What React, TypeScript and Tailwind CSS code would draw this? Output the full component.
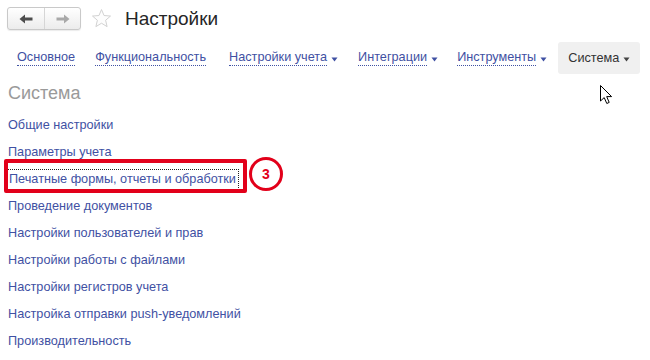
import React from "react";

const Caret = ({ color }: { color: string }) => (
  <svg width="7" height="5" viewBox="0 0 7 5" className="ml-[4px] mt-[2px] shrink-0">
    <path d="M0.5 0.5 L6.5 0.5 L3.5 4.5 Z" fill={color} />
  </svg>
);

const Tab = ({ label, caret }: { label: string; caret?: boolean }) => (
  <div className="flex items-center whitespace-nowrap shrink-0">
    <span className="text-[12.7px] text-[#3f51a3] border-b border-dotted border-[#3f51a3] leading-[15px]">
      {label}
    </span>
    {caret && <Caret color="#3f51a3" />}
  </div>
);

const items = [
  "Общие настройки",
  "Параметры учета",
  "Печатные формы, отчеты и обработки",
  "Проведение документов",
  "Настройки пользователей и прав",
  "Настройки работы с файлами",
  "Настройки регистров учета",
  "Настройка отправки push-уведомлений",
  "Производительность",
];

export default function App() {
  return (
    <div className="w-[650px] h-[360px] bg-white relative overflow-hidden font-['Liberation_Sans',Arial,sans-serif]">
      {/* Header */}
      <div className="h-[37px] flex items-center pl-[7px]">
        <div className="w-[74px] h-[23px] flex border border-[#c9c9c9] rounded-[3px] bg-gradient-to-b from-white to-[#ececec] shadow-[0_1px_1px_rgba(0,0,0,0.08)]">
          <div className="w-[37px] h-full flex items-center justify-center border-r border-[#d6d6d6]">
            <svg width="14" height="10" viewBox="0 0 14 10">
              <path d="M0.5 5 L6 0.5 L6 3.5 L13.5 3.5 L13.5 6.5 L6 6.5 L6 9.5 Z" fill="#4d4d4d" />
            </svg>
          </div>
          <div className="flex-1 h-full flex items-center justify-center">
            <svg width="14" height="10" viewBox="0 0 14 10">
              <path d="M13.5 5 L8 0.5 L8 3.5 L0.5 3.5 L0.5 6.5 L8 6.5 L8 9.5 Z" fill="#a9a9a9" />
            </svg>
          </div>
        </div>
        <svg width="21" height="21" viewBox="0 0 24 24" className="ml-[10px]">
          <path
            d="M12 1.8 L14.9 8.6 L22.3 9.2 L16.7 14 L18.4 21.3 L12 17.4 L5.6 21.3 L7.3 14 L1.7 9.2 L9.1 8.6 Z"
            fill="#fdfdfd"
            stroke="#cfcfcf"
            strokeWidth="1.1"
            strokeLinejoin="round"
          />
        </svg>
        <span className="ml-[13px] text-[19px] text-[#262626] leading-none">Настройки</span>
      </div>

      {/* Tabs */}
      <div className="mt-[5px] h-[32px] flex items-center pl-[17px]">
        <Tab label="Основное" />
        <div className="w-[20px] shrink-0" />
        <Tab label="Функциональность" />
        <div className="w-[23px] shrink-0" />
        <Tab label="Настройки учета" caret />
        <div className="w-[20px] shrink-0" />
        <Tab label="Интеграции" caret />
        <div className="w-[19px] shrink-0" />
        <Tab label="Инструменты" caret />
        <div className="w-[11px] shrink-0" />
        <div className="h-[32px] flex items-center px-[10px] bg-[#f0f0f0] rounded-[3px] whitespace-nowrap shrink-0">
          <span className="text-[12.7px] text-[#333] leading-[15px]">Система</span>
          <Caret color="#444" />
        </div>
      </div>

      {/* Heading */}
      <div className="mt-[8px] h-[22px] pl-[8px] flex items-center text-[18px] text-[#9a9a9a] leading-none">
        Система
      </div>

      {/* List */}
      <div className="mt-[8px] flex flex-col">
        {items.map((t, i) => (
          <div key={t} className="h-[27px] flex items-center pl-[8px] relative">
            {i === 2 ? (
              <>
                <span className="text-[12.7px] text-[#3f51a3] leading-[15px] outline outline-1 outline-dotted outline-[#222] outline-offset-[2px] ml-[1px] whitespace-nowrap">
                  {t}
                </span>
                <div className="absolute left-[4px] top-[-7px] w-[243px] h-[34px] border-[4px] border-[#e2001a] rounded-[2px]" />
                <div className="absolute left-[249px] top-[-9px] w-[34px] h-[34px] rounded-full border-[3px] border-[#e2001a] flex items-center justify-center text-[14px] font-bold text-[#e2001a]">
                  3
                </div>
              </>
            ) : (
              <span className="text-[12.7px] text-[#3f51a3] leading-[15px] whitespace-nowrap">{t}</span>
            )}
          </div>
        ))}
      </div>

      {/* Cursor */}
      <svg width="13" height="20" viewBox="0 0 13 20" className="absolute left-[600px] top-[85px]">
        <path
          d="M0.5 0.5 L0.5 16 L4.2 12.6 L6.8 18.5 L9.2 17.4 L6.7 11.6 L11.6 11.6 Z"
          fill="#fff"
          stroke="#000"
          strokeWidth="1"
          strokeLinejoin="round"
        />
      </svg>
    </div>
  );
}
